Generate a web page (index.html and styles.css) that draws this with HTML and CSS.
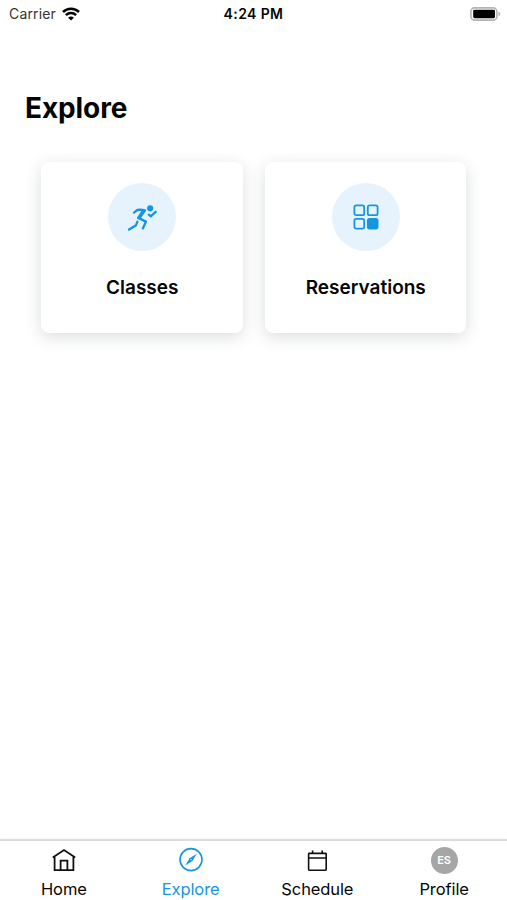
FILE: index.html
```html
<!DOCTYPE html>
<html lang="en">

<head>
  <meta charset="UTF-8">
  <meta name="viewport" content="width=device-width, initial-scale=1.0">
  <title>Explore</title>
  <link rel="stylesheet" href="styles.css">
</head>

<body>

  <header class="status-bar">
    <div class="carrier">
      <span class="carrier-name">Carrier</span>
      <svg class="wifi" width="18" height="14" viewBox="0 0 18 14">
        <path d="M1 5a11.5 11.5 0 0 1 16 0M3.9 8.2a7.3 7.3 0 0 1 10.2 0" fill="none" stroke="#000" stroke-width="2.5" />
        <path d="M9 13.6L6.1 10.8a4.2 4.2 0 0 1 5.8 0z" />
      </svg>
    </div>
    <span class="time">4:24 PM</span>
    <svg class="battery" width="31" height="14" viewBox="0 0 31 14">
      <rect x=".9" y=".9" width="26" height="12.2" rx="3.6" fill="#fff" stroke="#b4b4b4" stroke-width="1.6" />
      <rect x="3.2" y="2.8" width="21.8" height="8.4" rx="1.4" />
      <path d="M28.5 4.8q1.8 .6 1.8 2.2t-1.8 2.2z" fill="#b4b4b4" />
    </svg>
  </header>

  <main class="content">
    <h1>Explore</h1>

    <div class="cards">
      <a class="card">
        <span class="card-icon">
          <svg width="30" height="30" viewBox="0 0 30 30" fill="none" stroke="#1696e0" stroke-width="2.3" stroke-linecap="round" stroke-linejoin="round">
            <circle cx="23.2" cy="6.3" r="3.1" fill="#1696e0" stroke="none" />
            <path d="M7 10.6l3.4-2.6q3.6-.7 7.6.4l-5.6 8 6.6 3.2-3.2 6.8" />
            <path d="M16.2 9.2l-4.6 6.6" stroke-width="3.2" />
            <path d="M10.4 19.6l-1.6 4-6.8 4" />
            <path d="M21.8 12.7l2 1.7 4.9-4.6" />
          </svg>
        </span>
        <span class="card-title">Classes</span>
      </a>
      <a class="card">
        <span class="card-icon">
          <svg width="26" height="26" viewBox="0 0 26 26" fill="none" stroke="#1696e0" stroke-width="1.8">
            <rect x="1.4" y="1.4" width="9.8" height="9.8" rx="1.8" />
            <rect x="14.8" y="1.4" width="9.8" height="9.8" rx="1.8" />
            <rect x="1.4" y="14.8" width="9.8" height="9.8" rx="1.8" />
            <rect x="14.8" y="14.8" width="9.8" height="9.8" rx="1.8" fill="#1696e0" />
          </svg>
        </span>
        <span class="card-title">Reservations</span>
      </a>
    </div>
  </main>

  <nav class="tab-bar">
    <a class="tab">
      <span class="tab-icon">
        <svg width="26" height="26" viewBox="0 0 26 26" fill="none" stroke="#111" stroke-width="1.8">
          <path d="M1.8 10.4L13 3l11.2 7.4M3.6 9.4v13.8h18.8V9.4" />
          <path d="M9.6 23.2V13.6h6.8v9.6" />
        </svg>
      </span>
      <span>Home</span>
    </a>
    <a class="tab active">
      <span class="tab-icon">
        <svg width="26" height="26" viewBox="0 0 26 26">
          <circle cx="13" cy="12.6" r="11" fill="none" stroke="#1696e0" stroke-width="1.6" />
          <path d="M18.8 6.8l-4.4 7.2-7.2 4.4 4.4-7.2z" fill="#1696e0" />
          <circle cx="13" cy="12.6" r=".7" fill="#fff" />
        </svg>
      </span>
      <span>Explore</span>
    </a>
    <a class="tab">
      <span class="tab-icon">
        <svg width="26" height="26" viewBox="0 0 26 26" fill="none" stroke="#111" stroke-width="1.6">
          <rect x="4.6" y="6.4" width="17.6" height="16.8" rx=".6" />
          <path d="M4.6 11h17.6M8.6 3.4v3.4M18.2 3.4v3.4" />
        </svg>
      </span>
      <span>Schedule</span>
    </a>
    <a class="tab">
      <span class="tab-icon">
        <span class="avatar">ES</span>
      </span>
      <span>Profile</span>
    </a>
  </nav>

</body>

</html>
```
FILE: styles.css
```css
* {
  box-sizing: border-box;
}

body {
  display: flex;
  flex-direction: column;
  height: 100vh;
  margin: 0;
  background-color: #fff;
  color: #050505;
  font-family: Inter, "Liberation Sans", sans-serif;
}

svg {
  display: block;
}

.status-bar {
  display: grid;
  grid-template-columns: 1fr auto 1fr;
  align-items: center;
  height: 27px;
  padding: 0 6px 0 9px;
  font-size: 14px;
}

.carrier {
  display: flex;
  align-items: center;
  gap: 6px;
}

.carrier-name {
  color: #333;
  letter-spacing: 0.15px;
}

.time {
  padding-right: 3px;
  font-weight: 600;
  letter-spacing: 0.4px;
}

.battery {
  justify-self: end;
}

.content {
  flex: 1;
  padding: 63px 25px 0;
}

h1 {
  margin: 0;
  font-size: 28px;
  line-height: 36px;
  font-weight: 700;
  letter-spacing: -0.1px;
}

.cards {
  display: grid;
  grid-template-columns: 1fr 1fr;
  gap: 22px;
  margin-top: 36px;
  padding: 0 16px;
}

.card {
  display: flex;
  flex-direction: column;
  align-items: center;
  height: 171px;
  padding: 21px 0 0 1px;
  border-radius: 8px;
  background-color: #fff;
  box-shadow: 0 4px 16px rgba(40, 55, 55, 0.17);
}

.card-icon {
  display: flex;
  align-items: center;
  justify-content: center;
  width: 68px;
  height: 68px;
  border-radius: 50%;
  background-color: #e6f3fd;
}

.card-title {
  margin-top: 24px;
  font-size: 19px;
  line-height: 26px;
  font-weight: 600;
}

.tab-bar {
  display: grid;
  grid-template-columns: repeat(4, 1fr);
  height: 61px;
  border-top: 2px solid #dcdcdc;
  box-shadow: 0 -1px 3px rgba(0, 0, 0, 0.04);
}

.tab {
  display: flex;
  flex-direction: column;
  align-items: center;
  padding: 5px 0 0 1px;
  font-size: 16.5px;
  line-height: 20px;
  letter-spacing: -0.1px;
}

.tab.active {
  color: #1696e0;
}

.tab-icon {
  display: flex;
  align-items: center;
  height: 28px;
  margin-bottom: 5px;
}

.avatar {
  width: 27px;
  height: 27px;
  border-radius: 50%;
  background-color: #a6a6a6;
  color: #fff;
  font-size: 11px;
  line-height: 27px;
  font-weight: 600;
  text-align: center;
}
```
